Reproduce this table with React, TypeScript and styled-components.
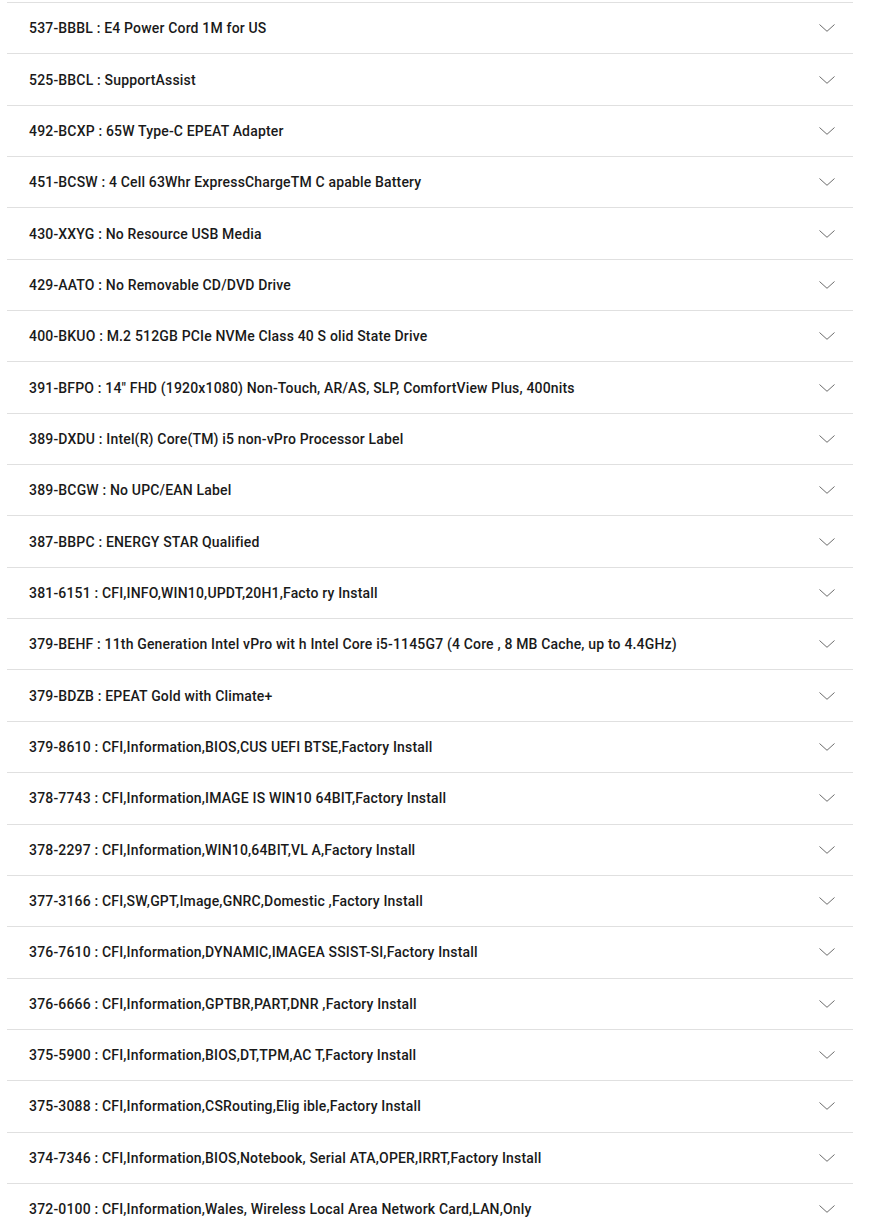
import React from "react";
import styled, { createGlobalStyle } from "styled-components";

const GlobalStyle = createGlobalStyle`
  html, body { margin: 0; padding: 0; background: #ffffff; }
  body { font-family: Roboto, "Noto Sans", Arial, sans-serif; }
`;

const List = styled.div`
  display: flex;
  flex-direction: column;
  width: 846px;
  margin-left: 7px;
  padding-top: 2px;
`;

const Row = styled.div`
  display: flex;
  align-items: center;
  justify-content: space-between;
  box-sizing: border-box;
  height: 51.35px;
  padding: 0 18px 0 22px;
  border-top: 1px solid #e0e0e0;
`;

const Label = styled.span`
  font-size: 14px;
  font-weight: 500;
  letter-spacing: 0.17px;
  color: #1a1a1a;
  line-height: 20px;
  white-space: nowrap;
`;

const Chevron = styled.svg`
  width: 16px;
  height: 8px;
  flex: none;
`;

const items = [
  "537-BBBL : E4 Power Cord 1M for US",
  "525-BBCL : SupportAssist",
  "492-BCXP : 65W Type-C EPEAT Adapter",
  "451-BCSW : 4 Cell 63Whr ExpressChargeTM C apable Battery",
  "430-XXYG : No Resource USB Media",
  "429-AATO : No Removable CD/DVD Drive",
  "400-BKUO : M.2 512GB PCIe NVMe Class 40 S olid State Drive",
  "391-BFPO : 14\" FHD (1920x1080) Non-Touch, AR/AS, SLP, ComfortView Plus, 400nits",
  "389-DXDU : Intel(R) Core(TM) i5 non-vPro Processor Label",
  "389-BCGW : No UPC/EAN Label",
  "387-BBPC : ENERGY STAR Qualified",
  "381-6151 : CFI,INFO,WIN10,UPDT,20H1,Facto ry Install",
  "379-BEHF : 11th Generation Intel vPro wit h Intel Core i5-1145G7 (4 Core , 8 MB Cache, up to 4.4GHz)",
  "379-BDZB : EPEAT Gold with Climate+",
  "379-8610 : CFI,Information,BIOS,CUS UEFI BTSE,Factory Install",
  "378-7743 : CFI,Information,IMAGE IS WIN10 64BIT,Factory Install",
  "378-2297 : CFI,Information,WIN10,64BIT,VL A,Factory Install",
  "377-3166 : CFI,SW,GPT,Image,GNRC,Domestic ,Factory Install",
  "376-7610 : CFI,Information,DYNAMIC,IMAGEA SSIST-SI,Factory Install",
  "376-6666 : CFI,Information,GPTBR,PART,DNR ,Factory Install",
  "375-5900 : CFI,Information,BIOS,DT,TPM,AC T,Factory Install",
  "375-3088 : CFI,Information,CSRouting,Elig ible,Factory Install",
  "374-7346 : CFI,Information,BIOS,Notebook, Serial ATA,OPER,IRRT,Factory Install",
  "372-0100 : CFI,Information,Wales, Wireless Local Area Network Card,LAN,Only",
];

export default function App() {
  return (
    <>
      <GlobalStyle />
      <List>
        {items.map((t) => (
          <Row key={t}>
            <Label>{t}</Label>
            <Chevron viewBox="0 0 16 8" fill="none">
              <path d="M0.5 0.5 L8 7.3 L15.5 0.5" stroke="#6b6b6b" strokeWidth="1" />
            </Chevron>
          </Row>
        ))}
      </List>
    </>
  );
}
